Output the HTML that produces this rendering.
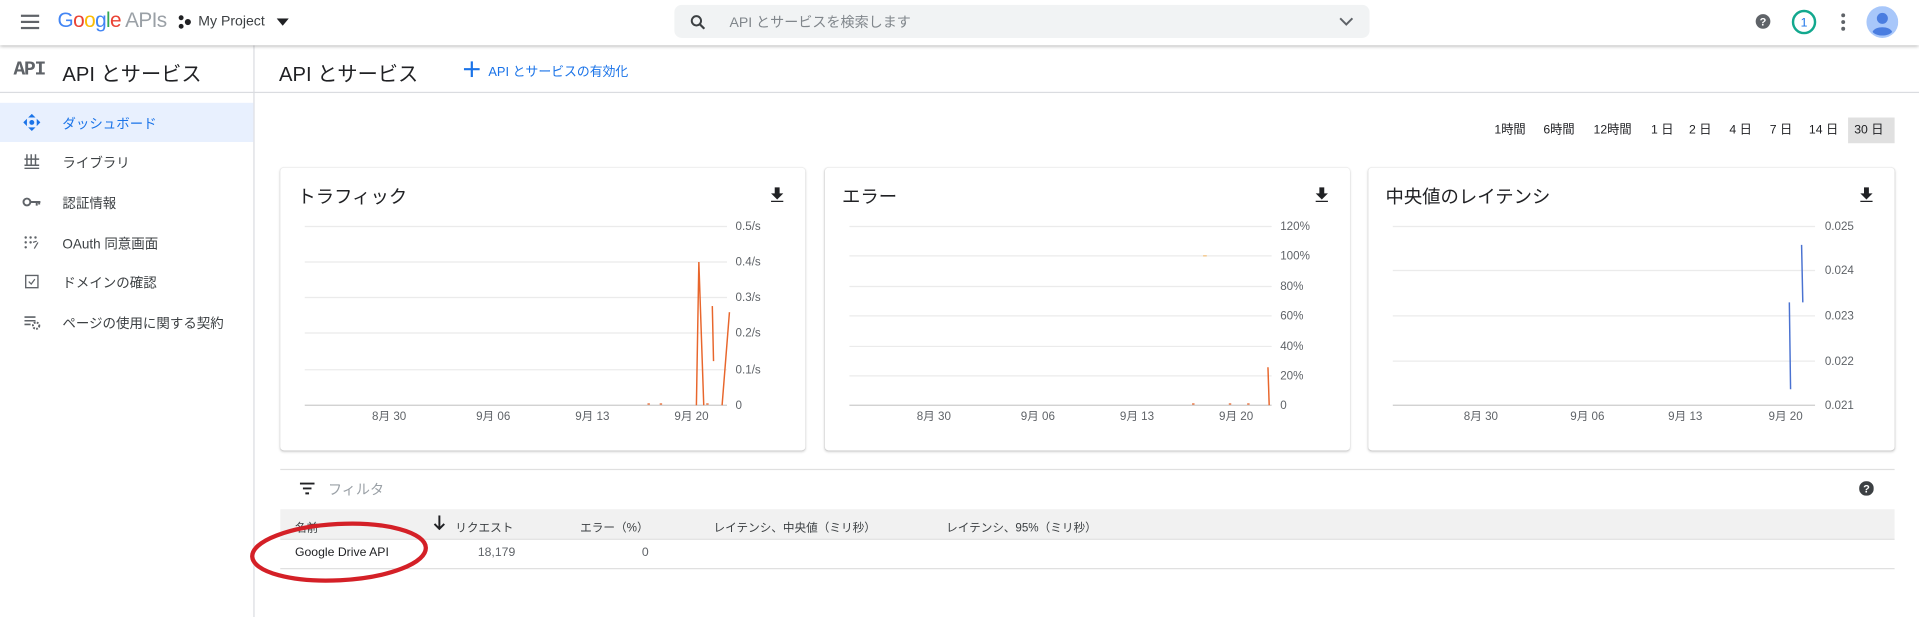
<!DOCTYPE html>
<html><head><meta charset="utf-8"><style>
html,body{margin:0;padding:0;background:#fff;overflow:hidden;width:1919px;height:617px}
#w{position:absolute;left:0;top:0;width:1568px;height:504px;transform:scale(1.2239,1.2242);transform-origin:0 0;font-family:"Liberation Sans","Noto Sans CJK JP",sans-serif;color:#202124}
.a{position:absolute;white-space:nowrap}
.card{position:absolute;top:137px;height:231px;background:#fff;border-radius:3px;box-shadow:0 1px 2px rgba(0,0,0,.18),0 0 1px rgba(0,0,0,.12)}
.ct{position:absolute;left:14px;top:13px;font-size:15px;color:#202124}
.nav{position:absolute;left:51px;font-size:11px;color:#3c4043}
.tb{position:absolute;top:96px;height:21px;line-height:21px;font-size:10px;color:#202124;padding:0 5px}
.th{position:absolute;top:423px;font-size:9.5px;color:#3c4043}
</style></head><body><div id="w">
<div class="a" style="left:0;top:0;width:1568px;height:37px;background:#fff;box-shadow:0 1px 3px rgba(0,0,0,.35);z-index:3">
 <svg class="a" style="left:17px;top:11px" width="16" height="14"><rect y="1" width="15" height="1.8" fill="#5f6368"/><rect y="6" width="15" height="1.8" fill="#5f6368"/><rect y="11" width="15" height="1.8" fill="#5f6368"/></svg>
 <div class="a" style="left:47px;top:7px;font-size:17px;letter-spacing:-0.5px"><span style="color:#4285f4">G</span><span style="color:#ea4335">o</span><span style="color:#fbbc05">o</span><span style="color:#4285f4">g</span><span style="color:#34a853">l</span><span style="color:#ea4335">e</span> <span style="color:#9aa0a6">APIs</span></div>
 <svg class="a" style="left:145px;top:12px" width="12" height="12"><circle cx="3" cy="2.5" r="2" fill="#202124"/><circle cx="3" cy="9.5" r="2" fill="#202124"/><circle cx="8.5" cy="6" r="2.5" fill="#202124"/></svg>
 <div class="a" style="left:162px;top:12px;font-size:11.5px;color:#3c4043">My Project</div>
 <svg class="a" style="left:226px;top:15px" width="10" height="6"><path d="M0 0h10L5 6z" fill="#202124"/></svg>
 <div class="a" style="left:551px;top:4px;width:568px;height:27px;background:#f1f3f4;border-radius:6px">
  <svg class="a" style="left:13px;top:8px" width="12" height="12"><circle cx="5" cy="5" r="3.8" fill="none" stroke="#3c4043" stroke-width="1.6"/><path d="M8 8l3.5 3.5" stroke="#3c4043" stroke-width="1.8"/></svg>
  <div class="a" style="left:45px;top:6px;font-size:11.5px;color:#80868b">API とサービスを検索します</div>
  <svg class="a" style="left:543px;top:10px" width="12" height="8"><path d="M1 1l5 5 5-5" fill="none" stroke="#5f6368" stroke-width="1.6"/></svg>
 </div>
 <svg class="a" style="left:1434px;top:11px" width="13" height="13"><circle cx="6.5" cy="6.5" r="6" fill="#5f6368"/><text x="6.5" y="10" font-size="9" font-weight="bold" fill="#fff" text-anchor="middle" font-family="Liberation Sans">?</text></svg>
 <svg class="a" style="left:1463px;top:7px" width="22" height="22"><circle cx="11" cy="11" r="9" fill="none" stroke="#12a88e" stroke-width="2"/><text x="11" y="14.5" font-size="10" fill="#1a73e8" text-anchor="middle" font-family="Liberation Sans">1</text></svg>
 <svg class="a" style="left:1503px;top:10px" width="6" height="16"><circle cx="3" cy="2.5" r="1.6" fill="#5f6368"/><circle cx="3" cy="8" r="1.6" fill="#5f6368"/><circle cx="3" cy="13.5" r="1.6" fill="#5f6368"/></svg>
 <svg class="a" style="left:1525px;top:5px" width="26" height="26"><circle cx="13" cy="13" r="13" fill="#a8c7fa"/><circle cx="13" cy="10" r="4.5" fill="#4a7de0"/><path d="M5 21c2-5 14-5 16 0c-3 4-13 4-16 0z" fill="#4a7de0"/></svg>
</div>
<div class="a" style="left:207px;top:37px;width:1px;height:467px;background:#dadce0"></div>
<div class="a" style="left:0;top:75px;width:1568px;height:1px;background:#dadce0"></div>
<div class="a" style="left:11px;top:48px;font-size:16px;font-weight:bold;color:#5f6368;font-family:'Liberation Mono',monospace;letter-spacing:-1px">API</div>
<div class="a" style="left:51px;top:47px;font-size:16.5px;color:#202124">API とサービス</div>
<div class="a" style="left:0;top:84px;width:207px;height:32px;background:#e8f0fe"></div>
<svg class="a" style="left:19px;top:93px" width="14" height="14"><path d="M7 0l3 3H4zM7 14l3-3H4zM0 7l3-3v6zM14 7l-3-3v6z" fill="#1a73e8"/><circle cx="7" cy="7" r="2" fill="#1a73e8"/></svg>
<div class="nav" style="top:93px;color:#1a73e8">ダッシュボード</div>
<svg class="a" style="left:19px;top:125px" width="14" height="13"><path d="M3 1v9M6.5 1v9M10 1v9M1 5h12M1 10h12M1 12.5h12" stroke="#5f6368" stroke-width="1.2"/></svg>
<div class="nav" style="top:125px">ライブラリ</div>
<svg class="a" style="left:18px;top:160px" width="16" height="10"><circle cx="4" cy="5" r="2.8" fill="none" stroke="#5f6368" stroke-width="1.6"/><path d="M7 5h8M12 5v3M14 5v2" stroke="#5f6368" stroke-width="1.6"/></svg>
<div class="nav" style="top:158px">認証情報</div>
<svg class="a" style="left:19px;top:191px" width="14" height="14" fill="#5f6368"><circle cx="2" cy="3" r="1"/><circle cx="6" cy="3" r="1"/><circle cx="10" cy="3" r="1"/><circle cx="2" cy="7" r="1"/><circle cx="6" cy="7" r="1"/><circle cx="2" cy="11" r="1"/><path d="M8 7l3-1M9 12l3-5" stroke="#5f6368" stroke-width="1"/></svg>
<div class="nav" style="top:191px">OAuth 同意画面</div>
<svg class="a" style="left:20px;top:224px" width="12" height="12"><rect x="1" y="1" width="10" height="10" fill="none" stroke="#5f6368" stroke-width="1.1"/><path d="M3.5 6l2 2 3-4" fill="none" stroke="#5f6368" stroke-width="1"/></svg>
<div class="nav" style="top:223px">ドメインの確認</div>
<svg class="a" style="left:19px;top:257px" width="15" height="13"><path d="M1 2h9M1 5h9M1 8h5" stroke="#5f6368" stroke-width="1.3"/><circle cx="10.5" cy="9" r="2.6" fill="none" stroke="#5f6368" stroke-width="1.6" stroke-dasharray="1.5 1"/></svg>
<div class="nav" style="top:256px">ページの使用に関する契約</div>
<div class="a" style="left:228px;top:47px;font-size:16.5px;color:#202124">API とサービス</div>
<svg class="a" style="left:379px;top:50px" width="13" height="13"><path d="M6.5 0v13M0 6.5h13" stroke="#1a73e8" stroke-width="1.8"/></svg>
<div class="a" style="left:399px;top:51px;font-size:10.5px;color:#1a73e8">API とサービスの有効化</div>
<div class="tb" style="left:1216px">1時間</div>
<div class="tb" style="left:1256px">6時間</div>
<div class="tb" style="left:1297px">12時間</div>
<div class="tb" style="left:1344px">1 日</div>
<div class="tb" style="left:1375px">2 日</div>
<div class="tb" style="left:1408px">4 日</div>
<div class="tb" style="left:1441px">7 日</div>
<div class="tb" style="left:1473px">14 日</div>
<div class="tb" style="left:1510px;background:#e0e0e0;width:28px">30 日</div>
<div class="card" style="left:229px;width:429px">
 <div class="ct">トラフィック</div>
 <svg class="a" style="left:400px;top:16px" width="12" height="12"><path d="M4 0h4v5h3L6 10 1 5h3zM1 11h10v1.5H1z" fill="#202124"/></svg>
 <svg class="a" style="left:0;top:0" width="429" height="231" font-family="Liberation Sans,Noto Sans CJK JP" font-size="9.5" fill="#5f6368">
  <g stroke="#ebebeb" stroke-width="1"><path d="M20 48h345M20 77h345M20 106h345M20 135h345M20 165h345"/><path d="M20 194h345" stroke="#ccc"/></g>
  <text x="372" y="51">0.5/s</text><text x="372" y="80">0.4/s</text><text x="372" y="109">0.3/s</text><text x="372" y="138">0.2/s</text><text x="372" y="168">0.1/s</text><text x="372" y="197">0</text>
  <text x="75" y="206">8月 30</text><text x="160" y="206">9月 06</text><text x="241" y="206">9月 13</text><text x="322" y="206">9月 20</text>
  <path d="M340 194L342 77L346 194M353 113L354 158M361 194L367 118" fill="none" stroke="#e8662c" stroke-width="1.2"/>
  <path d="M300 193h2M310 193h2M348 193h2" stroke="#e8662c"/>
 </svg>
</div>
<div class="card" style="left:674px;width:429px">
 <div class="ct">エラー</div>
 <svg class="a" style="left:400px;top:16px" width="12" height="12"><path d="M4 0h4v5h3L6 10 1 5h3zM1 11h10v1.5H1z" fill="#202124"/></svg>
 <svg class="a" style="left:0;top:0" width="429" height="231" font-family="Liberation Sans,Noto Sans CJK JP" font-size="9.5" fill="#5f6368">
  <g stroke="#ebebeb"><path d="M20 48h345M20 72h345M20 97h345M20 121h345M20 146h345M20 170h345"/><path d="M20 194h345" stroke="#ccc"/></g>
  <text x="372" y="51">120%</text><text x="372" y="75">100%</text><text x="372" y="100">80%</text><text x="372" y="124">60%</text><text x="372" y="149">40%</text><text x="372" y="173">20%</text><text x="372" y="197">0</text>
  <text x="75" y="206">8月 30</text><text x="160" y="206">9月 06</text><text x="241" y="206">9月 13</text><text x="322" y="206">9月 20</text>
  <path d="M362 163L363 194" stroke="#e8662c" stroke-width="1.2"/><path d="M309 72h3" stroke="#f4c07a"/>
  <path d="M300 193h2M330 193h2M345 193h2" stroke="#e8662c"/>
 </svg>
</div>
<div class="card" style="left:1118px;width:430px">
 <div class="ct">中央値のレイテンシ</div>
 <svg class="a" style="left:401px;top:16px" width="12" height="12"><path d="M4 0h4v5h3L6 10 1 5h3zM1 11h10v1.5H1z" fill="#202124"/></svg>
 <svg class="a" style="left:0;top:0" width="430" height="231" font-family="Liberation Sans,Noto Sans CJK JP" font-size="9.5" fill="#5f6368">
  <g stroke="#ebebeb"><path d="M20 48h345M20 84h345M20 121h345M20 158h345"/><path d="M20 194h345" stroke="#ccc"/></g>
  <text x="373" y="51">0.025</text><text x="373" y="87">0.024</text><text x="373" y="124">0.023</text><text x="373" y="161">0.022</text><text x="373" y="197">0.021</text>
  <text x="78" y="206">8月 30</text><text x="165" y="206">9月 06</text><text x="245" y="206">9月 13</text><text x="327" y="206">9月 20</text>
  <path d="M344 110L345 181M354 63L355 110" stroke="#4a72d1" stroke-width="1.2"/>
 </svg>
</div>
<div class="a" style="left:229px;top:383px;width:1319px;height:1px;background:#e0e0e0"></div>
<svg class="a" style="left:245px;top:394px" width="12" height="10"><path d="M0 1h12M2.5 5h7M4.5 9h3" stroke="#202124" stroke-width="1.6"/></svg>
<div class="a" style="left:268px;top:392px;font-size:11.5px;color:#9aa0a6">フィルタ</div>
<svg class="a" style="left:1519px;top:393px" width="12" height="12"><circle cx="6" cy="6" r="6" fill="#3c4043"/><text x="6" y="9.5" font-size="9" font-weight="bold" fill="#fff" text-anchor="middle" font-family="Liberation Sans">?</text></svg>
<div class="a" style="left:229px;top:416px;width:1319px;height:24px;background:#f1f1f1"></div>
<div class="a" style="left:229px;top:440px;width:1319px;height:1px;background:#e0e0e0"></div>
<div class="a" style="left:229px;top:464px;width:1319px;height:1px;background:#e0e0e0"></div>
<div class="th" style="left:241px">名前</div>
<svg class="a" style="left:354px;top:421px" width="10" height="12"><path d="M5 0v11M1 7l4 4 4-4" fill="none" stroke="#202124" stroke-width="1.6"/></svg>
<div class="th" style="left:372px">リクエスト</div>
<div class="th" style="left:474px">エラー（%）</div>
<div class="th" style="left:583px">レイテンシ、中央値（ミリ秒）</div>
<div class="th" style="left:773px">レイテンシ、95%（ミリ秒）</div>
<div class="a" style="left:241px;top:446px;font-size:10px;color:#202124">Google Drive API</div>
<div class="a" style="left:330px;width:91px;text-align:right;top:446px;font-size:10px;color:#5f6368">18,179</div>
<div class="a" style="left:430px;width:100px;text-align:right;top:446px;font-size:10px;color:#5f6368">0</div>
<svg class="a" style="left:200px;top:422px" width="155" height="60"><ellipse cx="77" cy="29" rx="71" ry="23" fill="none" stroke="#d42027" stroke-width="3.5" transform="rotate(-3 77 29)"/></svg>
</div></body></html>
